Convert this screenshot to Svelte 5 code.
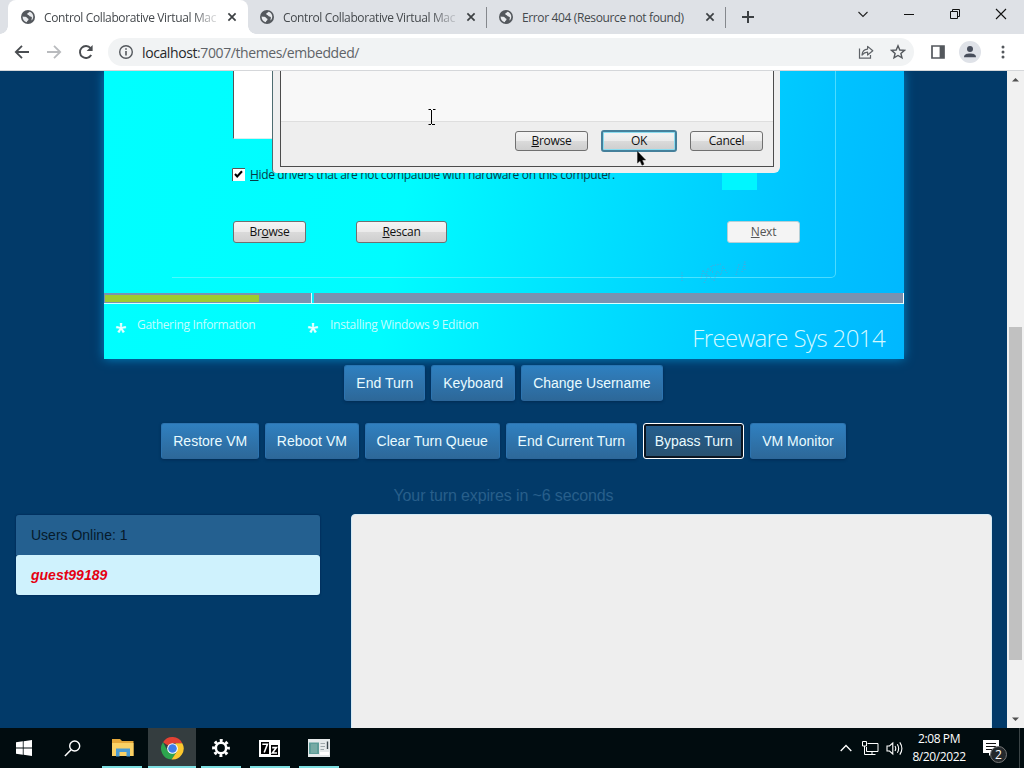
<script>
  let tabs = [
    { title: 'Control Collaborative Virtual Mac', active: true },
    { title: 'Control Collaborative Virtual Mac', active: false },
    { title: 'Error 404 (Resource not found)', active: false }
  ];
  let turnButtons = ['End Turn', 'Keyboard', 'Change Username'];
  let adminButtons = ['Restore VM', 'Reboot VM', 'Clear Turn Queue', 'End Current Turn', 'Bypass Turn', 'VM Monitor'];
  let focused = 'Bypass Turn';
  let users = ['guest99189'];
  let seconds = 6;
</script>

<div class="screen">
  <div class="tabstrip">
    {#each tabs as tab}
      <div class="tab" class:active={tab.active}>
        <svg class="globe" width="14" height="14" viewBox="0 0 14 14">
          <circle cx="7" cy="7" r="7" fill="#54585d" />
          <path d="M1.6 6.6 C3.5 7 5.2 6.7 6 7.8 C6.4 8.8 7.6 8.3 7.5 9.4 C7.3 10.5 6 10.5 5.8 12.3 C3.2 11.8 1.4 9.6 1.6 6.6Z" fill="#e9ebee" />
          <path d="M8.4 1.8 C8 3 6.3 2.7 6.2 4 C6.2 5.2 8 4.6 8.3 5.8 C8.6 7 10.3 6.2 10.8 7.3 C11.2 8.2 10.3 8.7 10.6 10.6 C13.4 8 12.8 3 8.4 1.8Z" fill="#e9ebee" />
        </svg>
        <span class="title" class:fade={tab.title.length > 30}>{tab.title}</span>
        <svg class="close" width="10" height="10" viewBox="0 0 10 10"><path d="M1.4 1.4 L8.6 8.6 M8.6 1.4 L1.4 8.6" stroke="#3c4043" stroke-width="1.7" /></svg>
      </div>
    {/each}
    <svg class="newtab" width="14" height="14" viewBox="0 0 14 14"><path d="M7 1 V13 M1 7 H13" stroke="#3c4043" stroke-width="2" /></svg>
    <div class="winctl">
      <svg width="46" height="28" viewBox="0 0 46 28"><path d="M18.5 12 L23 16.5 L27.5 12" fill="none" stroke="#222" stroke-width="1.1" /></svg>
      <svg width="46" height="28" viewBox="0 0 46 28"><path d="M18 14.5 H28" stroke="#111" stroke-width="1" /></svg>
      <svg width="46" height="28" viewBox="0 0 46 28"><path d="M18.5 11.5 H25.5 V18.5 H18.5Z M20.5 11.5 V9.5 H27.5 V16.5 H25.5" fill="none" stroke="#111" /></svg>
      <svg width="46" height="28" viewBox="0 0 46 28"><path d="M18 9 L28 19 M28 9 L18 19" stroke="#111" stroke-width="1.1" /></svg>
    </div>
  </div>

  <div class="toolbar">
    <svg width="16" height="16" viewBox="0 0 16 16"><path d="M15 8 H2 M8 1.8 L1.8 8 L8 14.2" fill="none" stroke="#4a4d51" stroke-width="1.8" /></svg>
    <svg width="16" height="16" viewBox="0 0 16 16"><path d="M1 8 H14 M8 1.8 L14.2 8 L8 14.2" fill="none" stroke="#b9bbbe" stroke-width="1.8" /></svg>
    <svg width="16" height="16" viewBox="0 0 16 16"><path d="M13.2 11 A6 6 0 1 1 12.6 4.2" fill="none" stroke="#4a4d51" stroke-width="1.9" /><path d="M14.6 1 V7 H8.6Z" fill="#4a4d51" /></svg>
    <div class="address">
      <svg width="16" height="16" viewBox="0 0 16 16"><circle cx="8" cy="8" r="6.3" fill="none" stroke="#54585d" stroke-width="1.4" /><path d="M8 7 V11.6 M8 4.2 V5.8" stroke="#54585d" stroke-width="1.6" /></svg>
      <span class="url"><b>localhost</b>:7007/themes/embedded/</span>
      <svg width="16" height="16" viewBox="0 0 16 16"><path d="M1.5 4.5 V14.2 H12.5 V11" fill="none" stroke="#5f6368" stroke-width="1.2" /><path d="M4 11 C4.3 7.3 6.2 5.2 9.6 5.1 V2.4 L14.8 6.8 L9.6 11 V8.2 C7.2 8.2 5.6 9.1 4 11Z" fill="none" stroke="#5f6368" stroke-width="1.2" stroke-linejoin="round" /></svg>
      <svg width="16" height="16" viewBox="0 0 16 16"><path d="M8 1.8 L9.8 6 L14.4 6.4 L10.9 9.4 L12 13.9 L8 11.5 L4 13.9 L5.1 9.4 L1.6 6.4 L6.2 6Z" fill="none" stroke="#54585d" stroke-width="1.4" /></svg>
    </div>
    <svg width="14" height="14" viewBox="0 0 14 14"><path d="M1 1 H13 V13 H1Z" fill="none" stroke="#54585d" stroke-width="1.7" /><path d="M8.6 1 H13 V13 H8.6Z" fill="#54585d" /></svg>
    <svg class="avatar" width="22" height="22" viewBox="0 0 22 22"><circle cx="11" cy="11" r="11" fill="#dfe2e8" /><circle cx="11" cy="7.9" r="3" fill="#484e5c" /><path d="M5 16.2 C5 13 8 12.4 11 12.4 C14 12.4 17 13 17 16.2Z" fill="#484e5c" /></svg>
    <svg class="dots" width="4" height="14" viewBox="0 0 4 14"><circle cx="2" cy="2" r="1.5" fill="#54585d" /><circle cx="2" cy="7" r="1.5" fill="#54585d" /><circle cx="2" cy="12" r="1.5" fill="#54585d" /></svg>
  </div>

  <div class="viewport">
    <main>
      <div class="vm">
        <div class="wizard">
          <div class="group">
            <div class="list"></div>
            <div class="checkrow">
              <svg width="13" height="13" viewBox="0 0 13 13"><path d="M0 0 H13 V13 H0Z" fill="#fff" /><path d="M.5 13 V.5 H13" fill="none" stroke="#555" /><path d="M3 6 L5.2 8.4 L10 3.2" fill="none" stroke="#000" stroke-width="2.1" /></svg>
              <span><u>H</u>ide drivers that are not compatible with hardware on this computer.</span>
              <div class="patch"></div>
            </div>
            <div class="wizbuttons">
              <div class="w7">Br<u>o</u>wse</div>
              <div class="w7 rescan"><u>R</u>escan</div>
              <div class="w7 next"><u>N</u>ext</div>
            </div>
          </div>
        </div>
        <div class="progress">
          <div class="step"><div class="done"></div></div>
          <div class="step second"></div>
        </div>
        <div class="steps">
          <span class="star">*</span>
          <span class="gather">Gathering Information</span>
          <span class="star">*</span>
          <span class="install">Installing Windows 9 Edition</span>
          <span class="brand">Freeware Sys 2014</span>
        </div>

        <div class="dialog">
          <div class="client">
            <div class="content"></div>
            <div class="actions">
              <div class="w7"><u>B</u>rowse</div>
              <div class="w7 ok">OK</div>
              <div class="w7">Cancel</div>
            </div>
          </div>
        </div>
        <svg class="ibeam" width="8" height="16" viewBox="0 0 8 16"><path d="M.5 .5 H3 M5 .5 H7.5 M3.5 1 V15 M.5 15.5 H3 M4 15.5 H7" stroke="#000" fill="none" /></svg>
        <svg class="pointer" width="10" height="15" viewBox="0 0 10 15"><path d="M.5 .5 V12 L3 9.8 L5 14.2 L7 13.2 L5.2 9 H8.6Z" fill="#000" stroke="#222" stroke-width=".5" /></svg>
        <svg class="noise" width="65" height="27" viewBox="0 0 65 27"><path d="M1 22 V12 M20 20 L22 11 L25 17 L27 9 L32 14 L30 7 L40 5 M23 24 L27 16 L33 22 L36 12 L40 16 L42 7 L46 14 M55 16 L58 5 M61 13 L64 2 M64 11 V3" fill="none" stroke="#58a2d4" stroke-dasharray="1 1.5" /></svg>
      </div>

      <div class="btns first">
        {#each turnButtons as label}
          <button>{label}</button>
        {/each}
      </div>
      <div class="btns">
        {#each adminButtons as label}
          <button class:focused={label === focused}>{label}</button>
        {/each}
      </div>
      <p class="turn">Your turn expires in ~{seconds} seconds</p>

      <div class="columns">
        <div class="users">
          <div class="head">Users Online: {users.length}</div>
          {#each users as user}
            <div class="user">{user}</div>
          {/each}
        </div>
        <div class="chat"></div>
      </div>
    </main>
    <div class="scrollbar">
      <svg width="17" height="17" viewBox="0 0 17 17"><path d="M5 10.5 L8.5 7 L12 10.5Z" fill="#505050" /></svg>
      <div class="thumb"></div>
      <svg width="17" height="17" viewBox="0 0 17 17"><path d="M5 6.5 L8.5 10 L12 6.5Z" fill="#505050" /></svg>
    </div>
  </div>

  <div class="taskbar">
    <div class="item">
      <svg width="16" height="16" viewBox="0 0 16 16"><path d="M0 2.3 L6.8 1.3 V7.6 H0Z M7.6 1.2 L16 0 V7.6 H7.6Z M0 8.4 H6.8 V14.7 L0 13.7Z M7.6 8.4 H16 V16 L7.6 14.8Z" fill="#fff" /></svg>
    </div>
    <div class="item">
      <svg width="17" height="17" viewBox="0 0 17 17"><circle cx="10.7" cy="6" r="5" fill="none" stroke="#fff" stroke-width="1.4" /><path d="M7.1 9.7 L.9 16" stroke="#fff" stroke-width="1.5" /></svg>
    </div>
    <div class="item app">
      <svg width="22" height="18" viewBox="0 0 22 18"><path d="M0 0 H8 L10 2 H21.5 V17 H0Z" fill="#e5a83a" /><path d="M0 4 H21.5 V17 H0Z" fill="#fad165" /><path d="M4 17.5 V9.5 H18 V17.5 H14.5 V13 H7.5 V17.5Z" fill="#4a9bd3" /></svg>
    </div>
    <div class="item app current">
      <svg width="23" height="23" viewBox="0 0 24 24"><path d="M12 12 L2.1 5.5 A11.5 11.5 0 0 1 22.2 6.5 L12 6.5Z" fill="#e34234" /><path d="M2.1 5.5 A11.5 11.5 0 0 0 11 23.5 L16.8 14.8 L7.2 14.8Z" fill="#2da44e" /><path d="M22.2 6.5 A11.5 11.5 0 0 1 11 23.5 L16.8 14.8 L15 6.5Z" fill="#fbc72e" /><circle cx="12" cy="12" r="5.6" fill="#fff" /><circle cx="12" cy="12" r="4.5" fill="#3f7de8" /></svg>
    </div>
    <div class="item app">
      <svg width="18" height="18" viewBox="0 0 18 18"><circle cx="9" cy="9" r="5.2" fill="none" stroke="#fff" stroke-width="2.6" /><circle cx="9" cy="9" r="7.4" fill="none" stroke="#fff" stroke-width="3" stroke-dasharray="2.9 2.91" stroke-dashoffset="1.45" /></svg>
    </div>
    <div class="item app">
      <svg width="21" height="17" viewBox="0 0 21 17"><path d="M0 0 H21 V17 H0Z" fill="#fff" /><path d="M2 2 H10 V14 H2Z M12 5 H19 V15 H12Z" fill="#000" /><path d="M3.3 4.2 H8.4 L5.2 12.5 M13.2 7.6 H17.4 L13.4 13 H18" fill="none" stroke="#fff" stroke-width="1.6" /></svg>
    </div>
    <div class="item app">
      <svg width="22" height="18" viewBox="0 0 22 18"><path d="M0 0 H22 V18 H0Z" fill="#e4e9ea" /><path d="M1 3.5 H11 V15 H1Z" fill="#5d9c98" /><path d="M3 5 H9 V14 H3Z" fill="#76aaa4" /><path d="M12.5 4.5 H17 M12.5 7.5 H17 M12.5 10.5 H16" stroke="#9da7aa" /><path d="M19.5 2.5 V10" stroke="#39464c" stroke-width="1.4" /><path d="M12 13 H21 V16 H12Z" fill="#fff" /></svg>
    </div>
    <div class="tray">
      <svg class="up" width="12" height="8" viewBox="0 0 12 8"><path d="M.7 7 L6 1.5 L11.3 7" fill="none" stroke="#fff" stroke-width="1.3" /></svg>
      <svg width="17" height="15" viewBox="0 0 17 15"><path d="M5.5 2.5 H16 V10.5 H4.5 V6 M10 10.5 V13.5 M6 13.5 H13.5 M.5 .5 H4.5 V5 H.5Z M2.5 5 V13.5 H6" fill="none" stroke="#fff" /></svg>
      <svg width="18" height="15" viewBox="0 0 18 15"><path d="M1 5 H3.5 L6.8 2 V13 L3.5 10 H1Z M9 5 Q10.5 7.5 9 10 M11.3 3.2 Q14 7.5 11.3 11.8 M13.8 1.4 Q18 7.5 13.8 13.6" fill="none" stroke="#fff" stroke-width="1.1" /></svg>
      <div class="clock"><span>2:08 PM</span><span class="date">8/20/2022</span></div>
      <div class="notif">
        <svg width="16" height="17" viewBox="0 0 16 17"><path d="M0 0 H16 V13 H9 L6 16 V13 H0Z" fill="#fff" /><path d="M3 3.5 H13 M3 6.5 H13 M3 9.5 H9" stroke="#111" /></svg>
        <span class="badge">2</span>
      </div>
      <div class="peek"></div>
    </div>
  </div>
</div>

<style>
  :global(body) {
    margin: 0;
    overflow: hidden;
  }
  .screen {
    display: flex;
    flex-direction: column;
    width: 1024px;
    height: 768px;
    overflow: hidden;
    font-family: "Open Sans", "Noto Sans", sans-serif;
    font-size: 12px;
  }
  svg {
    display: block;
    flex: none;
  }

  /* browser chrome */
  .tabstrip {
    display: flex;
    height: 34px;
    padding-left: 8px;
    background: #dee1e6;
  }
  .tab {
    display: flex;
    align-items: center;
    width: 239px;
    box-sizing: border-box;
    padding: 0 10px 0 12px;
    color: #45494d;
    position: relative;
  }
  .tab.active {
    width: 240px;
    padding: 0 11px 0 13px;
    background: #fff;
    border-radius: 8px 8px 0 0;
  }
  .tab.active::before,
  .tab.active::after {
    content: "";
    position: absolute;
    bottom: 0;
    left: -8px;
    width: 8px;
    height: 8px;
    background: radial-gradient(circle at 0 0, #dee1e6 7.5px, #fff 8px);
  }
  .tab.active::after {
    left: auto;
    right: -8px;
    background: radial-gradient(circle at 100% 0, #dee1e6 7.5px, #fff 8px);
  }
  .tab:not(.active) {
    border-right: 1px solid #888b90;
    border-image: linear-gradient(#dee1e6 8px, #85888d 8px 27px, #dee1e6 27px) 1;
  }
  .title {
    flex: 1;
    margin: 0 5px 0 9px;
    white-space: nowrap;
    letter-spacing: -0.37px;
  }
  .title.fade {
    -webkit-mask-image: linear-gradient(to right, #000 148px, rgba(0, 0, 0, 0.1) 174px);
    mask-image: linear-gradient(to right, #000 148px, rgba(0, 0, 0, 0.1) 174px);
  }
  .newtab {
    margin: 10px 0 0 15px;
  }
  .winctl {
    display: flex;
    margin-left: auto;
  }
  .toolbar {
    display: flex;
    align-items: center;
    height: 36px;
    padding: 0 19px 0 14px;
    border-bottom: 1px solid #d5d7da;
    background: #fff;
    gap: 16px;
  }
  .address {
    display: flex;
    align-items: center;
    flex: 1;
    height: 28px;
    margin-left: -2px;
    margin-right: 1px;
    padding: 0 8px 0 10px;
    border-radius: 14px;
    background: #f1f3f4;
    gap: 16px;
  }
  .url {
    flex: 1;
    margin-left: -8px;
    color: #5f6368;
    font-size: 14px;
    letter-spacing: -0.4px;
  }
  .url b {
    color: #26282b;
    font-weight: 400;
  }
  .avatar {
    margin-left: -2px;
  }
  .dots {
    margin-left: 4px;
  }

  /* page */
  .viewport {
    display: flex;
    height: 657px;
    overflow: hidden;
  }
  main {
    flex: 1;
    background: #023a69;
    font-family: "Liberation Sans", Arial, sans-serif;
  }
  .vm {
    position: relative;
    width: 800px;
    height: 288px;
    margin-left: 104px;
    background: linear-gradient(100deg, #00ffff 0%, #00fcff 38%, #00dfff 62%, #00c3ff 86%, #00b7ff 100%);
    box-shadow: 0 0 10px #0085c5;
    font-family: "Open Sans", "Noto Sans", sans-serif;
    font-size: 12px;
    letter-spacing: -0.25px;
  }
  .wizard {
    height: 222px;
    padding-left: 68px;
  }
  .group {
    width: 664px;
    height: 207px;
    box-sizing: border-box;
    padding: 0 35px 0 61px;
    border: 1px solid rgba(150, 245, 255, 0.5);
    border-width: 0 1px 1px 0;
    border-radius: 0 0 5px 0;
  }
  .list {
    width: 500px;
    height: 67px;
    border-left: 1px solid #555;
    border-bottom: 1px solid #d8efef;
    background: #fff;
  }
  .checkrow {
    display: flex;
    align-items: center;
    height: 27px;
    margin-top: 23px;
    color: #063c48;
  }
  .checkrow svg {
    margin: -3px 5px 0 -1px;
  }
  .checkrow span {
    margin-top: -2px;
    letter-spacing: -0.35px;
    white-space: nowrap;
  }
  .patch {
    width: 35px;
    height: 28px;
    margin-left: auto;
    margin-right: 43px;
    background: #00f6ff;
  }
  .wizbuttons {
    display: flex;
    margin-top: 32px;
  }
  .w7 {
    display: flex;
    align-items: center;
    justify-content: center;
    width: 73px;
    height: 22px;
    box-sizing: border-box;
    padding-bottom: 1px;
    border: 1px solid #707070;
    border-radius: 3px;
    background: linear-gradient(#f4f4f4, #ebebeb 48%, #dadada 52%, #cecece);
    color: #111;
  }
  .rescan {
    width: 91px;
    margin-left: 50px;
  }
  .next {
    margin-left: auto;
    margin-right: 0;
    border-color: #b5cfd6;
    background: #f4f4f4;
    color: #555;
  }
  .progress {
    display: flex;
    height: 11px;
    box-sizing: border-box;
    border-bottom: 1px solid #d9ffff;
    border-right: 1px solid #fff;
  }
  .step {
    width: 208px;
    box-sizing: border-box;
    padding: 2px 0 1px 1px;
    border-right: 1px solid #d9ffff;
    background: #7a92b0;
  }
  .step.second {
    flex: 1;
    border-right: 0;
    border-left: 2px solid #00efff;
  }
  .done {
    width: 154px;
    height: 100%;
    background: #9bcb32;
  }
  .steps {
    display: flex;
    align-items: flex-start;
    height: 55px;
    padding: 0 19px 0 11px;
    color: #c3fdff;
  }
  .star {
    width: 11px;
    margin-top: 12px;
    color: #e6ffff;
    font-size: 21px;
    font-weight: 600;
    line-height: 30px;
  }
  .gather {
    width: 170px;
    margin: 12px 0 0 11px;
    letter-spacing: -0.33px;
  }
  .install {
    margin: 12px 0 0 12px;
    letter-spacing: -0.28px;
  }
  .brand {
    margin: 16px 0 0 auto;
    color: #d2f8ff;
    font-size: 24px;
    font-weight: 300;
    line-height: 36px;
    letter-spacing: -0.6px;
    white-space: nowrap;
  }
  .dialog {
    position: absolute;
    left: 168px;
    top: 0;
    width: 508px;
    height: 102px;
    box-sizing: border-box;
    padding: 0 6px 5px 7px;
    border-left: 1px solid #4e6c70;
    border-radius: 0 0 6px 4px;
    background: #efefef;
  }
  .client {
    height: 96px;
    box-sizing: border-box;
    border: 1px solid #4c4c4c;
    border-top: 0;
    background: #eee;
  }
  .content {
    height: 50px;
    border-bottom: 1px solid #dedede;
    background: #f8f8f8;
  }
  .actions {
    display: flex;
    align-items: center;
    justify-content: flex-end;
    height: 37px;
    padding-right: 10px;
    gap: 13px;
  }
  .actions .w7 {
    height: 20px;
  }
  .actions .ok {
    width: 76px;
    height: 22px;
    border: 2px solid #45809b;
    box-shadow: inset 0 0 0 1px #8bdcef;
  }
  .ibeam {
    position: absolute;
    left: 324px;
    top: 38px;
  }
  .pointer {
    position: absolute;
    left: 533px;
    top: 80px;
  }
  .noise {
    position: absolute;
    left: 577px;
    top: 188px;
  }
  .btns {
    display: flex;
    justify-content: center;
    gap: 6px;
    margin-top: 22px;
  }
  .btns + .btns {
    gap: 5.7px;
  }
  .btns.first {
    margin-top: 6px;
  }
  button {
    height: 36px;
    padding: 0 11px;
    border: 1px solid #2d74b0;
    border-bottom-color: #2b669a;
    border-radius: 3px;
    background: linear-gradient(#3080c0, #2d6899);
    box-shadow: 0 1px 3px rgba(0, 20, 50, 0.4);
    color: #e9fbff;
    font: 14px "Liberation Sans", Arial, sans-serif;
  }
  button.focused {
    border: 1px solid #fff;
    background: linear-gradient(#255f90, #28506f);
    box-shadow: inset 0 0 0 2px #0b1521;
  }
  .turn {
    margin: 27px 0 0;
    color: #285f8b;
    font-size: 16px;
    line-height: 20px;
    letter-spacing: -0.13px;
    text-align: center;
  }
  .columns {
    display: flex;
    align-items: flex-start;
    margin-top: 8px;
    padding: 0 15px 0 16px;
    gap: 31px;
  }
  .users {
    width: 304px;
    margin-top: 1px;
    border-radius: 3px;
    box-shadow: 0 0 2px #001d49;
    font-size: 14px;
    line-height: 40px;
    overflow: hidden;
  }
  .head {
    padding-left: 15px;
    background: #246090;
    color: #061a2b;
  }
  .user {
    padding-left: 15px;
    border-radius: 3px 3px 0 0;
    background: #cff2fd;
    color: #e50012;
    font-weight: bold;
    font-style: italic;
  }
  .chat {
    flex: 1;
    height: 230px;
    border: 1px solid #d5eaf5;
    box-sizing: border-box;
    border-radius: 4px;
    background: #eee;
  }
  .scrollbar {
    display: flex;
    flex-direction: column;
    width: 17px;
    background: #f1f1f1;
  }
  .thumb {
    flex: none;
    width: 13px;
    height: 333px;
    margin: 239px 0 51px 2px;
    background: #c1c1c1;
  }

  /* taskbar */
  .taskbar {
    display: flex;
    height: 40px;
    background: #010c0f;
  }
  .item {
    display: flex;
    align-items: center;
    justify-content: center;
    width: 48px;
  }
  .item.app {
    width: 49px;
    box-sizing: border-box;
    background: linear-gradient(#7ddfe2, #7ddfe2) center bottom / 40px 2px no-repeat;
  }
  .item.app:nth-child(3) {
    width: 52px;
    padding-left: 1px;
  }
  .item.app.current {
    width: 48px;
    background: linear-gradient(#7ddfe2, #7ddfe2) center bottom / 48px 2px no-repeat #343d3f;
  }
  .tray {
    display: flex;
    align-items: center;
    margin-left: auto;
    color: #fff;
  }
  .tray svg {
    margin-right: 7px;
  }
  .tray .up {
    margin-right: 10px;
  }
  .clock {
    display: flex;
    flex-direction: column;
    align-items: center;
    width: 56px;
    line-height: 18px;
    letter-spacing: -0.4px;
    white-space: nowrap;
    margin-top: -1px;
  }
  .notif {
    position: relative;
    margin-left: 16px;
    margin-right: 20px;
  }
  .notif svg {
    margin: 0;
  }
  .badge {
    position: absolute;
    left: 7px;
    top: 6px;
    width: 17px;
    height: 17px;
    box-sizing: border-box;
    border: 1px solid #777;
    border-radius: 50%;
    background: #24292c;
    font-size: 12px;
    line-height: 15px;
    text-align: center;
  }
  .peek {
    width: 4px;
    height: 40px;
    border-left: 1px solid #3b4446;
  }
</style>
